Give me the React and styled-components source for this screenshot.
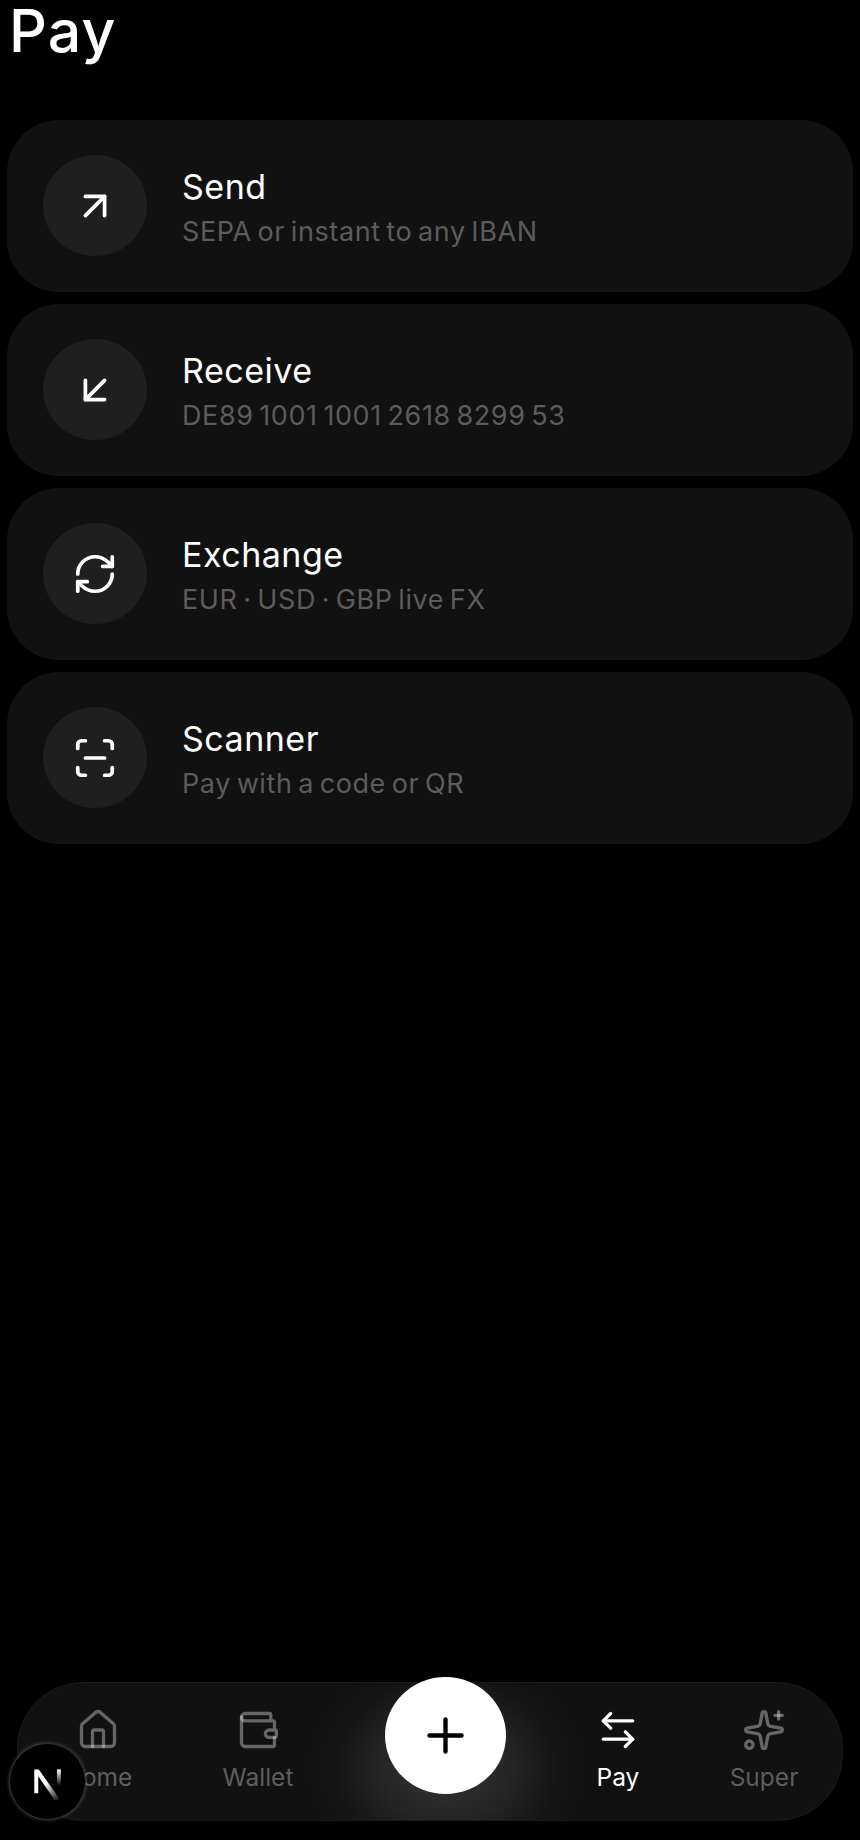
import React from "react";
import styled, { createGlobalStyle } from "styled-components";
import {
  ArrowUpRight,
  ArrowDownLeft,
  RefreshCw,
  ScanLine,
  House,
  Wallet,
  ArrowLeftRight,
  Sparkles,
  Plus,
} from "lucide-react";

const Global = createGlobalStyle`
  html, body { margin: 0; padding: 0; background: #000; }
  * { box-sizing: border-box; }
`;
const FONT = `Inter, "Open Sans", "Liberation Sans", sans-serif`;

const Page = styled.div`
  width: 860px;
  height: 1840px;
  background: #000;
  color: #fff;
  font-family: ${FONT};
  display: flex;
  flex-direction: column;
  overflow: hidden;
  position: relative;
`;
const Title = styled.h1`
  margin: 0;
  padding: 0 0 0 9px;
  height: 119.5px;
  font-size: 59px;
  line-height: 62px;
  font-weight: 500;
  letter-spacing: 1.2px;
`;
const List = styled.div`
  display: flex;
  flex-direction: column;
  gap: 12px;
  padding: 0 7px;
`;
const Card = styled.div`
  height: 172px;
  border-radius: 52px;
  background: #111111;
  display: flex;
  align-items: center;
  padding-left: 36px;
  gap: 35px;
`;
const Bubble = styled.div`
  width: 104px;
  height: 101px;
  border-radius: 50%;
  background: #1f1f1f;
  display: flex;
  align-items: center;
  justify-content: center;
  flex: none;
`;
const Texts = styled.div`
  display: flex;
  flex-direction: column;
  gap: 10px;
  padding-top: 4px;
`;
const Name = styled.div`
  font-size: 34px;
  line-height: 38px;
  font-weight: 400;
  letter-spacing: 0.5px;
`;
const Sub = styled.div`
  font-size: 27px;
  line-height: 32px;
  font-weight: 400;
  color: #5c5c5c;
  letter-spacing: 0.6px;
  word-spacing: -2.5px;
`;
const Nav = styled.nav`
  margin: auto 17px 19px;
  height: 139px;
  border-radius: 66px;
  background: #111111;
  border: 1px solid #1a1a1a;
  display: grid;
  grid-template-columns: 160px 160px 212px 136px 1fr;
  position: relative;
  overflow: hidden;
`;
const Tab = styled.div`
  display: flex;
  flex-direction: column;
  align-items: center;
  padding-top: 25px;
  gap: 9px;
  color: ${(p) => (p.$active ? "#ffffff" : "#5e5e5e")};
  font-size: 24.5px;
  line-height: 32px;
  position: relative;
`;
const Glow = styled.div`
  position: absolute;
  left: 288px;
  top: -30px;
  width: 280px;
  height: 230px;
  background: radial-gradient(closest-side, rgba(255,255,255,.15), rgba(255,255,255,.085) 45%, rgba(255,255,255,.015) 80%, rgba(255,255,255,0));
`;
const Fab = styled.div`
  position: absolute;
  left: 385px;
  top: 1677px;
  width: 121px;
  height: 117px;
  border-radius: 50%;
  background: #fff;
  display: flex;
  align-items: center;
  justify-content: center;
`;
const Badge = styled.div`
  position: absolute;
  left: 9px;
  top: 1743px;
  width: 77px;
  height: 77px;
  border-radius: 50%;
  background: #000;
  border: 1px solid #333;
  box-shadow: 0 0 3px 1px rgba(255, 255, 255, 0.16);
  display: flex;
  align-items: center;
  justify-content: center;
  padding: 3px 0 0 3px;
`;

const dim = "rgba(255,255,255,.36)";
const rowIcon = { size: 46, strokeWidth: 1.95, color: "#fff" };
const tabIcon = { size: 44, strokeWidth: 1.8, color: dim };

const rows = [
  { name: "Send", sub: "SEPA or instant to any IBAN", Glyph: ArrowUpRight },
  { name: "Receive", sub: "DE89 1001 1001 2618 8299 53", Glyph: ArrowDownLeft },
  { name: "Exchange", sub: "EUR · USD · GBP live FX", Glyph: RefreshCw },
  { name: "Scanner", sub: "Pay with a code or QR", Glyph: ScanLine },
];

export default function App() {
  return (
    <Page>
      <Global />
      <Title>Pay</Title>
      <List>
        {rows.map(({ name, sub, Glyph }) => (
          <Card key={name}>
            <Bubble>
              <Glyph {...rowIcon} />
            </Bubble>
            <Texts>
              <Name>{name}</Name>
              <Sub>{sub}</Sub>
            </Texts>
          </Card>
        ))}
      </List>
      <Nav>
        <Glow />
        <Tab>
          <House {...tabIcon} />
          <span>Home</span>
        </Tab>
        <Tab>
          <Wallet {...tabIcon} />
          <span>Wallet</span>
        </Tab>
        <span />
        <Tab $active>
          <ArrowLeftRight {...tabIcon} color="#fff" />
          <span>Pay</span>
        </Tab>
        <Tab>
          <Sparkles {...tabIcon} />
          <span>Super</span>
        </Tab>
      </Nav>
      <Fab>
        <Plus size={55} strokeWidth={1.9} color="#000" />
      </Fab>
      <Badge>
        <svg width="34" height="34" viewBox="0 0 30 30" fill="none">
          <defs>
            <linearGradient id="n1" x1="0" y1="0" x2="1" y2="1">
              <stop offset="0.45" stopColor="#fff" />
              <stop offset="1" stopColor="#fff" stopOpacity="0" />
            </linearGradient>
            <linearGradient id="n2" x1="0" y1="0" x2="0" y2="1">
              <stop offset="0" stopColor="#fff" />
              <stop offset="0.8" stopColor="#fff" stopOpacity="0" />
            </linearGradient>
          </defs>
          <path d="M2 3h4l19 27h-5L5.500 9v15H2Z" fill="url(#n1)" />
          <rect x="22" y="3" width="3.500" height="18" fill="url(#n2)" />
        </svg>
      </Badge>
    </Page>
  );
}
